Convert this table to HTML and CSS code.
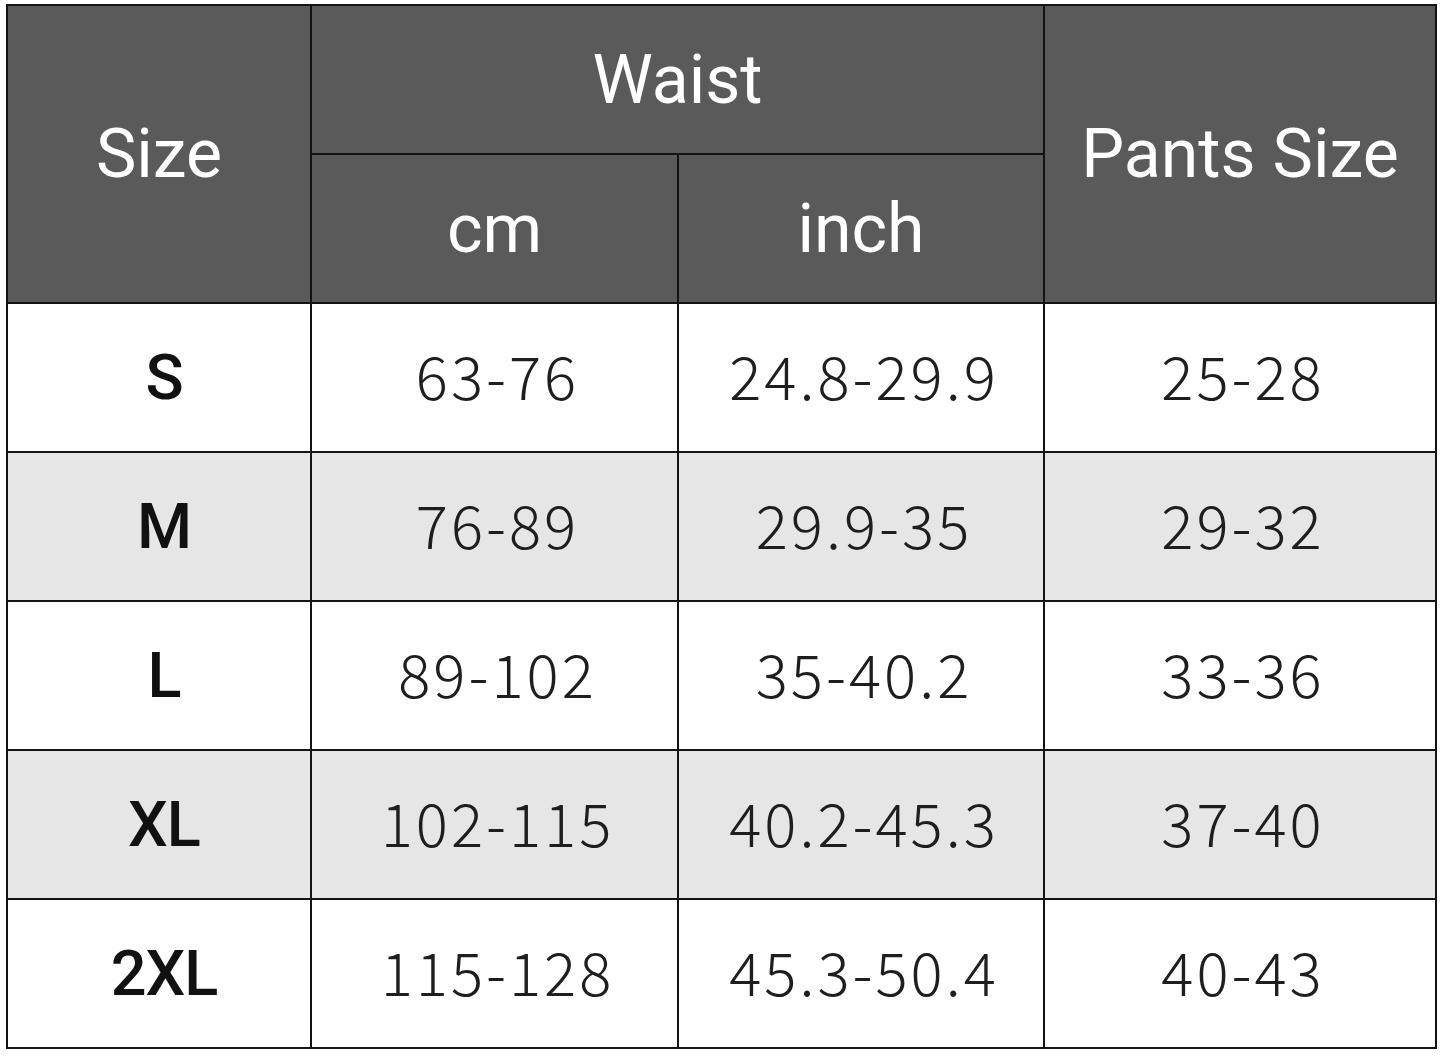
FILE: index.html
```html
<!DOCTYPE html>
<html>
<head>
<meta charset="utf-8">
<link rel="stylesheet" href="styles.css">
</head>
<body>
<table class="chart">
  <colgroup>
    <col class="c-size">
    <col class="c-cm">
    <col class="c-inch">
    <col class="c-pants">
  </colgroup>
  <thead>
    <tr class="hrow">
      <th rowspan="2">Size</th>
      <th colspan="2">Waist</th>
      <th rowspan="2">Pants Size</th>
    </tr>
    <tr class="hrow">
      <th>cm</th>
      <th>inch</th>
    </tr>
  </thead>
  <tbody>
    <tr class="drow"><td class="sz">S</td><td>63-76</td><td>24.8-29.9</td><td>25-28</td></tr>
    <tr class="drow alt"><td class="sz">M</td><td>76-89</td><td>29.9-35</td><td>29-32</td></tr>
    <tr class="drow"><td class="sz">L</td><td>89-102</td><td>35-40.2</td><td>33-36</td></tr>
    <tr class="drow alt"><td class="sz">XL</td><td>102-115</td><td>40.2-45.3</td><td>37-40</td></tr>
    <tr class="drow"><td class="sz">2XL</td><td>115-128</td><td>45.3-50.4</td><td>40-43</td></tr>
  </tbody>
</table>
</body>
</html>
```
FILE: styles.css
```css
html, body {
  margin: 0;
  padding: 0;
  background: #ffffff;
}
body {
  padding: 4px 0 0 6px;
}
.chart {
  border-collapse: collapse;
  table-layout: fixed;
  width: 1429px;
  border: 2px solid #141414;
}
.c-size { width: 304px; }
.c-cm { width: 367px; }
.c-inch { width: 366px; }
.c-pants { width: 392px; }
.chart th, .chart td {
  border: 2px solid #141414;
  text-align: center;
  vertical-align: middle;
  padding: 0;
}
.hrow { height: 149px; }
.chart th {
  background: #5a5a5a;
  color: #ffffff;
  font-family: Roboto, "Liberation Sans", sans-serif;
  font-weight: 400;
  font-size: 68px;
  line-height: 1;
}
.drow { height: 149px; }
.drow.alt td { background: #e6e6e6; }
.chart td {
  font-family: "Noto Sans CJK SC", "Noto Sans", sans-serif;
  font-weight: 300;
  font-size: 60px;
  color: #1e1e1e;
  line-height: 1;
  letter-spacing: 3px;
  padding: 0 0 8px 6px;
}
.chart td.sz {
  font-family: Roboto, "Liberation Sans", sans-serif;
  font-weight: 500;
  color: #111111;
  font-size: 63px;
  letter-spacing: -1px;
  padding: 0 0 0 10px;
}
```
